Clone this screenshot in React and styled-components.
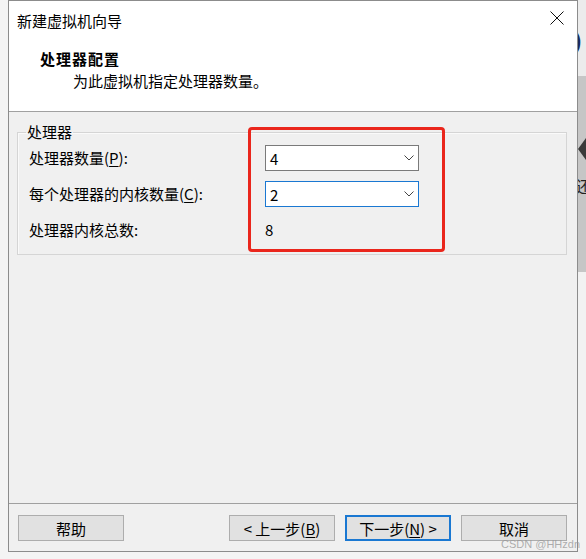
import React from 'react';
import styled, { createGlobalStyle } from 'styled-components';

const Global = createGlobalStyle`
  html, body { margin: 0; padding: 0; }
  body {
    background: #f4f4f4;
    font-family: "Noto Sans CJK SC", "Microsoft YaHei", sans-serif;
    color: #000;
  }
`;

const Page = styled.div`
  display: flex;
  width: 586px;
  height: 559px;
  padding-left: 8px;
  box-sizing: border-box;
  overflow: hidden;
  background: #f4f4f4;
`;

const Window = styled.div`
  position: relative;
  flex: none;
  width: 570px;
  height: 552px;
  box-sizing: border-box;
  border: 1px solid #8c8c8c;
  background: #f0f0f0;
  display: flex;
  flex-direction: column;
  font-size: 15px;
`;

const TitleBar = styled.div`
  height: 40px;
  flex: none;
  background: #fff;
  display: flex;
  justify-content: space-between;
  align-items: flex-start;
  padding: 0 13px 0 8px;
  line-height: 40px;
`;

const CloseIcon = styled.svg`
  margin-top: 10px;
  width: 14px;
  height: 14px;
`;

const Header = styled.div`
  height: 70px;
  flex: none;
  box-sizing: border-box;
  background: #fff;
  padding: 7px 0 0 31px;
`;

const Heading = styled.div`
  font-weight: 700;
  line-height: 22px;
  letter-spacing: 1px;
`;

const Subtitle = styled.div`
  padding-left: 33px;
  line-height: 22px;
`;

const Separator = styled.div`
  height: 1px;
  flex: none;
  background: #a0a0a0;
`;

const Content = styled.div`
  flex: 1;
  padding: 10px 10px 0 8px;
`;

const Group = styled.fieldset`
  margin: 0;
  border: 1px solid #d5d5d5;
  box-shadow: inset 1px 1px 0 #fafafa;
  padding: 3px 0 11px 11px;
`;

const Legend = styled.legend`
  padding: 0 1px;
  margin-left: -3px;
  line-height: 20px;
`;

const Form = styled.div`
  display: grid;
  grid-template-columns: 236px 154px;
  grid-auto-rows: 26px;
  row-gap: 10px;
  align-items: center;
`;

const Label = styled.div`
  line-height: 26px;
  white-space: nowrap;
`;

const Combo = styled.div`
  height: 26px;
  box-sizing: border-box;
  border: 1px solid ${(p) => (p.$focused ? '#1a78d2' : '#7a7a7a')};
  background: #fff;
  display: flex;
  align-items: center;
  justify-content: space-between;
  padding: 0 4px 0 4px;
`;

const Value = styled.div`
  line-height: 26px;
`;

const Footer = styled.div`
  height: 47px;
  flex: none;
  box-sizing: border-box;
  padding: 11px 10px 0 9px;
  display: flex;
  gap: 10px;
`;

const Button = styled.div`
  width: 106px;
  height: 26px;
  box-sizing: border-box;
  border: ${(p) => (p.$primary ? '2px solid #1a78d2' : '1px solid #adadad')};
  background: #e1e1e1;
  display: flex;
  align-items: center;
  justify-content: center;
  white-space: pre;
  margin-right: ${(p) => (p.$push ? 'auto' : '0')};
`;

const U = styled.span`
  text-decoration: underline;
  text-underline-offset: 2px;
`;

const Annotation = styled.div`
  position: absolute;
  left: 239px;
  top: 126px;
  width: 197px;
  height: 125px;
  box-sizing: border-box;
  border: 3px solid #ea261c;
  border-radius: 4px;
  pointer-events: none;
`;

const Watermark = styled.div`
  position: absolute;
  left: 492px;
  top: 537px;
  font-family: "Liberation Sans", Arial, sans-serif;
  font-size: 11px;
  line-height: 13px;
  color: rgba(150, 150, 150, 0.75);
  white-space: nowrap;
`;

const RightStrip = styled.div`
  flex: 1;
  display: flex;
  flex-direction: column;
  overflow: hidden;
`;

const StripTop = styled.div`
  height: 76px;
  background: #ececec;
  padding-top: 28px;
  box-sizing: border-box;
  color: #1c2b57;
  font-family: "Liberation Sans", sans-serif;
  font-weight: 700;
  font-size: 22px;
  line-height: 26px;
  margin-left: -4px;
`;

const StripMid = styled.div`
  height: 196px;
  background: #c6c6c6;
  display: flex;
  flex-direction: column;
  padding-top: 62px;
  box-sizing: border-box;
`;

const StripChar = styled.div`
  margin-top: 16px;
  margin-left: -2px;
  font-size: 15px;
  line-height: 20px;
  color: #222;
  white-space: nowrap;
`;

const StripBottom = styled.div`
  flex: 1;
  background: #f2f2f2;
`;

const Chevron = () => (
  <svg width="10" height="6" viewBox="0 0 10 6">
    <path d="M0.5 0.5 L5 5 L9.5 0.5" fill="none" stroke="#444" strokeWidth="1" />
  </svg>
);

export default function App() {
  return (
    <>
      <Global />
      <Page>
        <Window>
          <TitleBar>
            <span>新建虚拟机向导</span>
            <CloseIcon viewBox="0 0 14 14">
              <path d="M0.5 0.5 L13.5 13.5 M13.5 0.5 L0.5 13.5" stroke="#111" strokeWidth="1" fill="none" />
            </CloseIcon>
          </TitleBar>
          <Header>
            <Heading>处理器配置</Heading>
            <Subtitle>为此虚拟机指定处理器数量。</Subtitle>
          </Header>
          <Separator />
          <Content>
            <Group>
              <Legend>处理器</Legend>
              <Form>
                <Label>处理器数量(<U>P</U>):</Label>
                <Combo>
                  <span>4</span>
                  <Chevron />
                </Combo>
                <Label>每个处理器的内核数量(<U>C</U>):</Label>
                <Combo $focused>
                  <span>2</span>
                  <Chevron />
                </Combo>
                <Label>处理器内核总数:</Label>
                <Value>8</Value>
              </Form>
            </Group>
          </Content>
          <Separator />
          <Footer>
            <Button $push>帮助</Button>
            <Button>{'< 上一步('}<U>B</U>{')'}</Button>
            <Button $primary>{'下一步('}<U>N</U>{') >'}</Button>
            <Button>取消</Button>
          </Footer>
          <Annotation />
          <Watermark>CSDN @HHzdn</Watermark>
        </Window>
        <RightStrip>
          <StripTop>)</StripTop>
          <StripMid>
            <svg width="8" height="22" viewBox="0 0 8 22">
              <path d="M8 0 L0 11 L8 22 Z" fill="#3a3a3a" />
            </svg>
            <StripChar>还</StripChar>
          </StripMid>
          <StripBottom />
        </RightStrip>
      </Page>
    </>
  );
}
